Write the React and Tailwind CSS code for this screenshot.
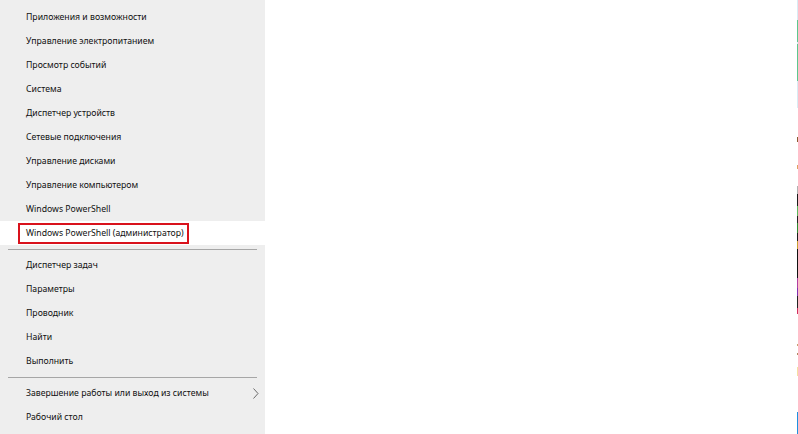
import React from 'react';

const groups = [
    [
        'Приложения и возможности',
        'Управление электропитанием',
        'Просмотр событий',
        'Система',
        'Диспетчер устройств',
        'Сетевые подключения',
        'Управление дисками',
        'Управление компьютером',
        'Windows PowerShell',
        'Windows PowerShell (администратор)',
    ],
    ['Диспетчер задач', 'Параметры', 'Проводник', 'Найти', 'Выполнить'],
    ['Завершение работы или выход из системы', 'Рабочий стол'],
];

// thin slice of a neighbouring window visible at the right edge
const edge = [
    { h: 20, c: '#d8ecf4' },
    { h: 23, c: '#5cc78e' },
    { h: 2, c: '#d8ecf4' },
    { h: 38, c: '#5cc78e' },
    { h: 27, c: '#d8ecf4' },
    { h: 30, c: '#ffffff' },
    { h: 5, c: '#8a5a30' },
    { h: 23, c: '#ffffff' },
    { h: 5, c: '#e0a060' },
    { h: 17, c: '#ffffff' },
    { h: 8, c: '#b0b0b0' },
    { h: 12, c: '#1a1a1a' },
    { h: 10, c: '#5cb85c' },
    { h: 8, c: '#222222' },
    { h: 10, c: '#2e8b2e' },
    { h: 8, c: '#1a1a1a' },
    { h: 8, c: '#c8a030' },
    { h: 30, c: '#111111' },
    { h: 10, c: '#b040a0' },
    { h: 8, c: '#8030b0' },
    { h: 12, c: '#222222' },
    { h: 6, c: '#d03060' },
    { h: 31, c: '#ffffff' },
    { h: 2, c: '#c8a070' },
    { h: 7, c: '#ffffff' },
    { h: 2, c: '#b08860' },
    { h: 13, c: '#ffffff' },
    { h: 9, c: '#f5e0a0' },
    { h: 37, c: '#ffffff' },
    { h: 22, c: '#1e90e0' },
];

const MenuRow = ({ label, selected, arrow }) => (
    <div className={`relative h-6 flex items-center pl-[26px] pr-3 ${selected ? 'bg-white' : ''}`}>
        {selected && (
            <div className="absolute left-[18px] top-[2px] w-[171px] h-[21px] border-2 border-[#d9121c]" />
        )}
        <span className="text-[8.7px] text-[#111111] leading-none whitespace-nowrap">{label}</span>
        {arrow && (
            <svg className="absolute right-[6px] top-[7px]" width="6" height="11" viewBox="0 0 6 11">
                <path d="M0.5 0.5 L5 5.5 L0.5 10.5" fill="none" stroke="#6a6a6a" strokeWidth="1" />
            </svg>
        )}
    </div>
);

export default function App() {
    return (
        <div className="flex h-[434px] w-[798px] bg-white" style={{ fontFamily: '"Noto Sans", "Open Sans", sans-serif' }}>
            <div className="w-[265px] bg-[#eeeeee] pt-[5px] flex flex-col">
                {groups.map((items, gi) => (
                    <div key={gi}>
                        {gi > 0 && (
                            <div className="h-2 flex items-center px-2">
                                <div className="h-px w-full bg-[#a6a6a6]" />
                            </div>
                        )}
                        {items.map((label) => (
                            <MenuRow
                                key={label}
                                label={label}
                                selected={label === 'Windows PowerShell (администратор)'}
                                arrow={label === 'Завершение работы или выход из системы'}
                            />
                        ))}
                    </div>
                ))}
            </div>
            <div className="flex-1" />
            <div className="w-px flex flex-col">
                {edge.map((s, i) => (
                    <div key={i} style={{ height: s.h, background: s.c }} />
                ))}
            </div>
        </div>
    );
}
